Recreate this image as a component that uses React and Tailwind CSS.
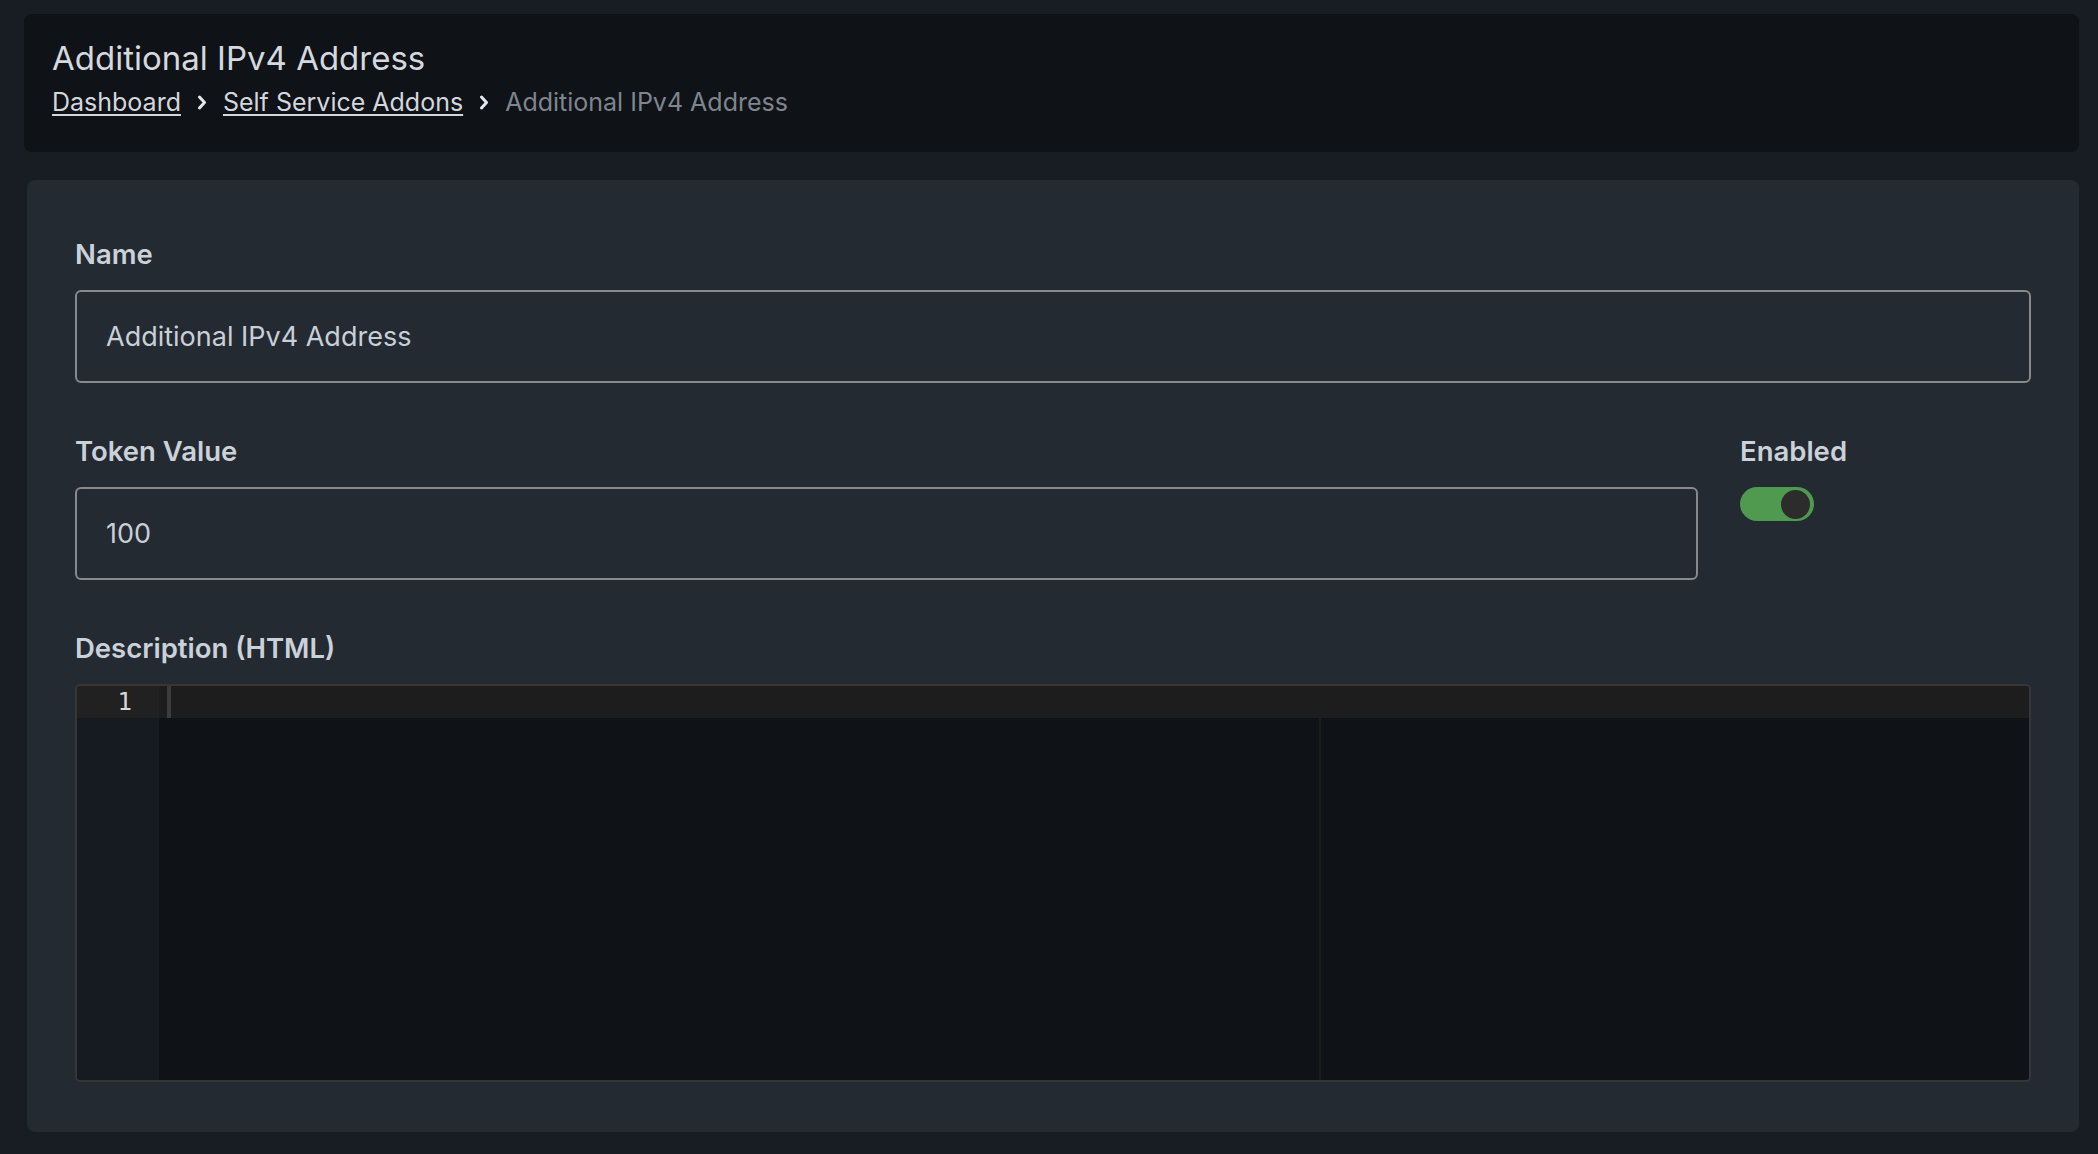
import React from 'react'

function Chevron() {
    return (
        <svg width="10" height="15" viewBox="0 0 10 15" className="mx-[16px] shrink-0">
            <polyline points="2.5,2 7.5,7.5 2.5,13" fill="none" stroke="#e4e7eb" strokeWidth="3" strokeLinecap="round" strokeLinejoin="round" />
        </svg>
    )
}

function Label({ children }) {
    return <label className="block mb-[16px] text-[27.5px] leading-[40px] font-semibold text-[#cbd1d9]">{children}</label>
}

function TextInput({ value }) {
    return (
        <div className="flex items-center h-[93px] w-full rounded-[6px] border-2 border-[#86898e] bg-[#242a32] pl-[29px] pt-[2px] text-[27px] text-[#c9cfd7]">
            {value}
        </div>
    )
}

export default function App() {
    return (
        <div className="min-h-screen bg-[#181c23] pt-[14px] pb-[22px] pl-[24px] pr-[19px] font-['Inter',sans-serif]">
            <header className="rounded-lg bg-[#0f1217] pl-[28px] pt-[24px] pb-[34px]">
                <h1 className="text-[33px] leading-[40px] text-[#d5d9df]">Additional IPv4 Address</h1>
                <nav className="mt-[8px] flex items-center text-[25px] leading-[32px]">
                    <a className="text-[#d3d7dd] underline decoration-2 underline-offset-[3px]">Dashboard</a>
                    <Chevron />
                    <a className="text-[#d3d7dd] underline decoration-2 underline-offset-[3px]">Self Service Addons</a>
                    <Chevron />
                    <span className="text-[#7f858e]">Additional IPv4 Address</span>
                </nav>
            </header>

            <main className="mt-[28px] ml-[3px] rounded-lg bg-[#242a32] px-12 pt-[54px] pb-[50px]">
                <div>
                    <Label>Name</Label>
                    <TextInput value="Additional IPv4 Address" />
                </div>

                <div className="mt-12 grid grid-cols-12 gap-x-[42px]">
                    <div className="col-span-10">
                        <Label>Token Value</Label>
                        <TextInput value="100" />
                    </div>
                    <div className="col-span-2">
                        <Label>Enabled</Label>
                        <div className="flex items-center justify-end w-[74px] h-[34px] rounded-full bg-[#4f9a4f] pr-[4px]">
                            <div className="w-[29px] h-[29px] rounded-full bg-[#2c2c2c]" />
                        </div>
                    </div>
                </div>

                <div className="mt-12">
                    <Label>Description (HTML)</Label>
                    <div className="flex flex-col h-[398px] rounded-[5px] border-2 border-[#363636] overflow-hidden font-['DejaVu_Sans_Mono',monospace]">
                        <div className="flex h-[32px] shrink-0">
                            <div className="w-[82px] bg-[#212121] pr-[27px] text-right text-[24px] leading-[32px] text-[#d8d8d8]">1</div>
                            <div className="flex-1 bg-[#1d1d1d] pl-[8px]">
                                <div className="w-[4px] h-full bg-[#3c3c3c]" />
                            </div>
                        </div>
                        <div className="flex flex-1">
                            <div className="w-[82px] bg-[#161a21]" />
                            <div className="flex flex-1 bg-[#0f1217]">
                                <div className="w-[1160px] shrink-0" />
                                <div className="border-l-2 border-[#1c1c1d]" />
                            </div>
                        </div>
                    </div>
                </div>
            </main>
        </div>
    )
}
